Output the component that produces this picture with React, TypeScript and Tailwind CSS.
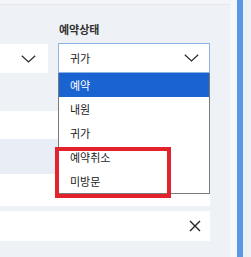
import React from "react";

const Chevron = () => (
  <svg width="15" height="8" viewBox="0 0 15 8" fill="none">
    <path d="M0.8 0.8 L7.5 7 L14.2 0.8" stroke="#2b2b2b" strokeWidth="1.2" />
  </svg>
);

const options = ["예약", "내원", "귀가", "예약취소", "미방문"];

export default function App() {
  return (
    <div
      className="flex h-[257px] w-[251px] overflow-hidden bg-[#eef1f6] text-[#222]"
      style={{ fontFamily: '"Noto Sans CJK KR", "Noto Sans", sans-serif' }}
    >
      <div className="relative flex w-[230px] flex-col">
        <div className="h-[5px] border-b border-[#e3e6ec] bg-[#f3f5f9]" />
        {/* filter row */}
        <div className="flex w-[210px] items-end gap-[10px] pt-[18px]">
          <div className="flex h-[29px] w-[48px] items-center justify-end bg-white pr-[12px]">
            <Chevron />
          </div>
          <div className="flex flex-1 flex-col gap-[7px]">
            <span className="pl-[1px] text-[11px] font-bold leading-[13px] text-[#333]">
              예약상태
            </span>
            <div className="flex h-[30px] items-center justify-between border border-[#8db3e4] bg-white pl-[11px] pr-[10px]">
              <span className="text-[11px] leading-none">귀가</span>
              <Chevron />
            </div>
          </div>
        </div>
        {/* rows */}
        <div className="flex w-[210px] flex-col">
          <div className="h-[38px]" />
          <div className="h-[28px] bg-white" />
          <div className="h-[35px] bg-[#e9edf5]" />
          <div className="h-[32px] bg-white" />
          <div className="h-[5px]" />
          <div className="flex h-[30px] items-center justify-end bg-white pr-[9px]">
            <svg width="12" height="12" viewBox="0 0 12 12">
              <path d="M1 1 L11 11 M11 1 L1 11" stroke="#222" strokeWidth="1.4" />
            </svg>
          </div>
        </div>
        {/* open dropdown */}
        <ul className="absolute left-[58px] top-[73px] w-[152px] border border-t-0 border-[#7a7a7a] bg-white">
          {options.map((o, i) => (
            <li
              key={o}
              className={
                i === 0
                  ? "flex h-[24px] items-center bg-[#1a64d1] pl-[11px] text-[11px] text-white"
                  : "flex h-[24px] items-center pl-[11px] text-[11px]"
              }
            >
              {o}
            </li>
          ))}
        </ul>
        {/* annotation */}
        <div className="absolute left-[55px] top-[147px] h-[51px] w-[116px] border-[4px] border-[#e3222b]" />
      </div>
      <div className="w-[7px] bg-[#f5f7fb]" />
      <div className="w-[6px] bg-[#5b97e9]" />
      <div className="flex-1 bg-[#eef1f6]" />
    </div>
  );
}
